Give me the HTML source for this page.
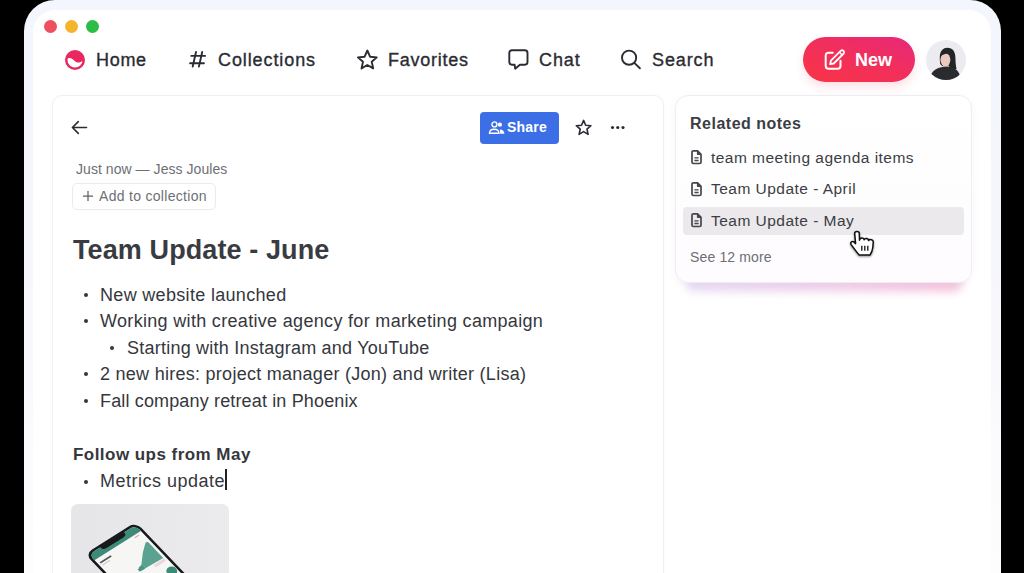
<!DOCTYPE html>
<html><head><meta charset="utf-8">
<style>
*{margin:0;padding:0;box-sizing:border-box}
html,body{width:1024px;height:573px;overflow:hidden;background:#000;font-family:"Liberation Sans",sans-serif;}
.abs{position:absolute}
#win{position:absolute;left:24px;top:0px;width:977px;height:620px;background:linear-gradient(180deg,#f3f6fd 0px,#f4f6fc 150px,#f7f7fc 320px,#fbfbfd 450px,#fdfdfe 573px);border-radius:31px 31px 0 0}
#inner{position:absolute;left:33px;top:10px;width:958px;height:620px;background:#fff;border-radius:22px 22px 0 0}
.dot{position:absolute;top:20px;width:13px;height:13px;border-radius:50%}
.t{position:absolute;white-space:nowrap;line-height:1}
.nav{font-size:18px;color:#2a2c33;letter-spacing:0.9px;-webkit-text-stroke:0.35px #2a2c33}
#card{position:absolute;left:52px;top:95px;width:612px;height:520px;border:1px solid #f0f0f2;border-radius:10px;background:#fff;box-shadow:0 0 4px rgba(0,0,0,0.025)}
#rel{position:absolute;left:675px;top:95px;width:297px;height:188px;border:1px solid #efedf3;border-radius:13px;background:linear-gradient(180deg,#ffffff 0%,#fefcfe 100%);box-shadow:0 2px 6px rgba(200,170,210,0.12)}
#relsh{position:absolute;left:686px;top:272px;width:276px;height:20px;border-radius:8px;background:linear-gradient(90deg,rgba(205,180,235,0.45),rgba(225,165,215,0.5) 50%,rgba(240,150,195,0.55));filter:blur(4.5px)}
.body{font-size:18px;color:#35373d;letter-spacing:0.32px}
.bul{position:absolute;width:4px;height:4px;border-radius:50%;background:#35373d}
.rn{font-size:15.5px;color:#3b3d43;letter-spacing:0.47px}
svg{position:absolute;overflow:visible}
</style></head><body>
<div id="win"></div>
<div id="inner"></div>
<div class="dot" style="left:44px;background:#ef4f5f"></div>
<div class="dot" style="left:65px;background:#f4b42c"></div>
<div class="dot" style="left:86px;background:#2bbd46"></div>

<!-- nav -->
<svg style="left:64.8px;top:49.5px" width="20" height="20" viewBox="0 0 20 20">
  <defs><clipPath id="hc"><circle cx="10" cy="10" r="7.5"/></clipPath></defs>
  <circle cx="10" cy="10" r="10" fill="#e8285f"/>
  <path clip-path="url(#hc)" d="M0 9.8 C2.5 7.6 5 7.3 7.4 9.1 C9.6 10.9 11 12.6 13 12.6 C15 12.6 16.5 11.3 20 10.3 V20 H0 Z" fill="#fff"/>
</svg>
<div class="t nav" style="left:96px;top:51px;letter-spacing:0.7px">Home</div>

<svg style="left:188px;top:50px" width="20" height="20" viewBox="0 0 20 20" fill="none" stroke="#2a2c33" stroke-width="1.9" stroke-linecap="round">
  <path d="M8 2 L4.7 16.6 M14.2 2 L10.9 16.6 M3.3 5.9 H17.1 M2.1 13.3 H15.9"/>
</svg>
<div class="t nav" style="left:218px;top:51px">Collections</div>

<svg style="left:356px;top:49px" width="22" height="21" viewBox="0 0 22 21" fill="none" stroke="#2a2c33" stroke-width="1.9" stroke-linejoin="round">
  <path d="M11.35 1.50 L14.05 7.68 L20.77 8.34 L15.72 12.82 L17.17 19.41 L11.35 16.00 L5.53 19.41 L6.98 12.82 L1.93 8.34 L8.65 7.68 Z"/>
</svg>
<div class="t nav" style="left:388px;top:51px;letter-spacing:0.75px">Favorites</div>

<svg style="left:507px;top:49px" width="22" height="22" viewBox="0 0 22 22" fill="none" stroke="#2a2c33" stroke-width="1.9" stroke-linejoin="round">
  <path d="M4.9 1.3 H17.9 C19.5 1.3 20.5 2.3 20.5 3.9 V13.1 C20.5 14.7 19.5 15.7 17.9 15.7 H12.9 L8.2 19.7 L7.6 15.7 H4.9 C3.3 15.7 2.3 14.7 2.3 13.1 V3.9 C2.3 2.3 3.3 1.3 4.9 1.3 Z"/>
</svg>
<div class="t nav" style="left:539px;top:51px">Chat</div>

<svg style="left:620px;top:50px" width="22" height="21" viewBox="0 0 22 21" fill="none" stroke="#2a2c33" stroke-width="1.9" stroke-linecap="round">
  <circle cx="9.1" cy="7.7" r="7.1"/><path d="M14.3 12.9 L19.9 18.3"/>
</svg>
<div class="t nav" style="left:652px;top:51px">Search</div>

<!-- New button -->
<div class="abs" style="left:803px;top:37px;width:112px;height:45px;border-radius:23px;background:linear-gradient(20deg,#f93547 0%,#f22f5a 50%,#e6297a 100%);box-shadow:0 5px 10px rgba(240,60,100,0.16)"></div>
<svg style="left:823px;top:49px" width="22" height="22" viewBox="0 0 22 22" fill="none" stroke="#fff" stroke-width="1.8" stroke-linecap="round" stroke-linejoin="round">
  <path d="M9.8 3.8 H5.6 C3.8 3.8 2.7 4.9 2.7 6.7 V16.8 C2.7 18.6 3.8 19.7 5.6 19.7 H14.6 C16.4 19.7 17.5 18.6 17.5 16.8 V11.8" stroke-width="2"/>
  <path d="M7.2 15.2 L7.9 11.7 L17.9 1.7 A2 2 0 0 1 20.7 4.5 L10.7 14.5 Z" stroke-width="1.8"/>
  <path d="M16.4 3.2 L19.2 6" stroke-width="1.4"/>
</svg>
<div class="t" style="left:855px;top:51px;font-size:18px;font-weight:bold;color:#fff">New</div>

<!-- avatar -->
<div class="abs" style="left:925.5px;top:39.5px;width:40px;height:40px;border-radius:50%;background:#ecebef;overflow:hidden">
  <svg style="left:0;top:0" width="40" height="40" viewBox="0 0 40 40">
    <path d="M13.8 18 C13.6 11 17 7.8 21.5 7.8 C26.5 7.8 29.3 11.5 29.4 17.5 C29.5 22 29.8 25.5 30.5 29 L24 29 L23 26 L16 26 L14.2 24 C13.9 22 13.8 20 13.8 18 Z" fill="#232427"/>
    <path d="M17 23 H22.5 V28.5 H17 Z" fill="#d9aca7"/>
    <ellipse cx="19.4" cy="19.8" rx="5" ry="6.5" fill="#ecc8c3"/>
    <path d="M14.3 16.5 C14.8 12 18.5 10.5 22.5 11 C24.5 11.3 25.6 12.5 25.8 14.5 C23.5 13 19 12.8 14.3 16.5 Z" fill="#232427"/>
    <path d="M3.5 40 C4 33.5 8 29 14 27.4 C17 26.6 21 26.6 25 27.2 C30.5 28.2 33.5 32 34.5 38 L34.5 40 Z" fill="#2a2b2e"/>
  </svg>
</div>

<!-- main card -->
<div id="card"></div>
<svg style="left:71px;top:120px" width="18" height="15" viewBox="0 0 18 15" fill="none" stroke="#2a2c33" stroke-width="1.6" stroke-linecap="round" stroke-linejoin="round">
  <path d="M15.5 7.5 H1.8 M7.3 1.6 L1.4 7.5 L7.3 13.4"/>
</svg>

<div class="abs" style="left:480px;top:112px;width:79px;height:32px;border-radius:4px;background:#3c6fe5"></div>
<svg style="left:488px;top:121px" width="17" height="13" viewBox="0 0 17 13" fill="none" stroke="#fff" stroke-width="1.4">
  <circle cx="6.4" cy="3.4" r="2.5"/>
  <path d="M1.5 12.3 C1.5 9.6 3.4 8.3 6.2 8.3 C9 8.3 10.9 9.6 10.9 12.3 Z"/>
  <circle cx="11.9" cy="3.7" r="2.1" fill="#fff" stroke="none"/>
  <path d="M11.9 8.4 C14.6 8.4 16.4 10 16.4 12.8 H12.2 Z" fill="#fff" stroke="none"/>
</svg>
<div class="t" style="left:507px;top:120px;font-size:14px;font-weight:bold;color:#fff;letter-spacing:0.2px">Share</div>
<svg style="left:574px;top:118px" width="19" height="19" viewBox="0 0 19 19" fill="none" stroke="#2a2c33" stroke-width="1.6" stroke-linejoin="round">
  <path d="M9.60 2.40 L11.69 7.23 L16.92 7.72 L12.98 11.20 L14.13 16.33 L9.60 13.65 L5.07 16.33 L6.22 11.20 L2.28 7.72 L7.51 7.23 Z"/>
</svg>
<svg style="left:610px;top:125px" width="16" height="5" viewBox="0 0 16 5" fill="#2a2c33">
  <circle cx="2.5" cy="2.5" r="1.55"/><circle cx="7.75" cy="2.5" r="1.55"/><circle cx="13" cy="2.5" r="1.55"/>
</svg>

<div class="t" style="left:76px;top:162px;font-size:14px;color:#6d6f75;letter-spacing:0.05px">Just now — Jess Joules</div>
<div class="abs" style="left:72px;top:183px;width:144px;height:27px;border:1px solid #ebebee;border-radius:5px"></div>
<svg style="left:82px;top:189.5px" width="12" height="12" viewBox="0 0 12 12" fill="none" stroke="#5f6167" stroke-width="1.25"><path d="M6 1 V11 M1 6 H11"/></svg>
<div class="t" style="left:99px;top:189px;font-size:14px;color:#6d6f75;letter-spacing:0.3px">Add to collection</div>

<div class="t" style="left:73px;top:237px;font-size:27px;font-weight:bold;color:#393b41;letter-spacing:0.1px">Team Update - June</div>

<div class="bul" style="left:84px;top:293px"></div>
<div class="t body" style="left:100px;top:286px">New website launched</div>
<div class="bul" style="left:84px;top:319px"></div>
<div class="t body" style="left:100px;top:312px">Working with creative agency for marketing campaign</div>
<div class="bul" style="left:110px;top:346px"></div>
<div class="t body" style="left:127px;top:339px;letter-spacing:0.23px">Starting with Instagram and YouTube</div>
<div class="bul" style="left:84px;top:372px"></div>
<div class="t body" style="left:100px;top:365px;letter-spacing:0.27px">2 new hires: project manager (Jon) and writer (Lisa)</div>
<div class="bul" style="left:84px;top:399px"></div>
<div class="t body" style="left:100px;top:392px;letter-spacing:0.15px">Fall company retreat in Phoenix</div>

<div class="t" style="left:73px;top:446px;font-size:17px;letter-spacing:0.46px;font-weight:bold;color:#35373d">Follow ups from May</div>
<div class="bul" style="left:84px;top:480px"></div>
<div class="t body" style="left:100px;top:472px;letter-spacing:0.5px">Metrics update</div>
<div class="abs" style="left:225px;top:469px;width:1.5px;height:21px;background:#222"></div>

<!-- image -->
<div class="abs" style="left:71px;top:504px;width:158px;height:80px;border-radius:7px;background:linear-gradient(90deg,#e6e6e9,#ebebee);overflow:hidden">
  <svg style="left:0;top:0" width="158" height="80" viewBox="0 0 158 80">
    <g transform="matrix(0.846,-0.534,0.69,0.723,14,50)">
      <rect x="0" y="0" width="60" height="120" rx="8" fill="#17191a"/>
      <rect x="2.6" y="2.6" width="54.8" height="114" rx="6" fill="#f6f6f5"/>
      <path d="M2.6 8.6 C2.6 5 5 2.6 8.6 2.6 H51.4 C55 2.6 57.4 5 57.4 8.6 V10.5 H2.6 Z" fill="#3c8a77"/>
      <path d="M16 2 H44 V3.5 C44 5.5 42.5 6.6 40 6.6 H20 C17.5 6.6 16 5.5 16 3.5 Z" fill="#17191a"/>
      <rect x="5" y="15" width="13" height="1.8" fill="#55575a"/>
      <rect x="5" y="18.5" width="9" height="1.1" fill="#c4c6c8"/>
      <path d="M28 45 L30 41 L34 40 L39 35 L44 30 L49 26 L53 23 L55 24 L55 46 Z" fill="#5aa391"/>
      <path d="M28 45 V42 L34 41 L34 45.5 Z" fill="#4b9582"/>
      <rect x="43" y="47" width="12" height="3" fill="#ecd5dc"/>
      <circle cx="52" cy="62" r="5" fill="#3c8a77"/>
      <rect x="48" y="12.5" width="5" height="1.2" fill="#e3a0a0"/>
    </g>
  </svg>
</div>

<!-- related notes -->
<div id="relsh"></div>
<div id="rel"></div>
<div class="t" style="left:690px;top:116px;font-size:16px;font-weight:bold;color:#3b3d43;letter-spacing:0.5px">Related notes</div>
<div class="abs" style="left:683px;top:207px;width:281px;height:28px;border-radius:4px;background:#ebe9ec"></div>

<svg style="left:691px;top:149.5px" width="11" height="14" viewBox="0 0 11 14" fill="none" stroke="#44464c" stroke-width="1.7" stroke-linejoin="round"><path d="M1 2.2 C1 1.3 1.5 0.9 2.4 0.9 H6.6 L10 4.3 V12.2 C10 13.1 9.5 13.5 8.6 13.5 H2.4 C1.5 13.5 1 13.1 1 12.2 Z"/><path d="M6.4 1 L9.9 4.5 L6.4 4.5 Z" fill="#44464c" stroke-width="1"/><path d="M3.4 7.9 H7.6 M3.4 10.5 H7.6" stroke-width="1.3"/></svg>
<div class="t rn" style="left:711px;top:150px">team meeting agenda items</div>
<svg style="left:691px;top:182px" width="11" height="14" viewBox="0 0 11 14" fill="none" stroke="#44464c" stroke-width="1.7" stroke-linejoin="round"><path d="M1 2.2 C1 1.3 1.5 0.9 2.4 0.9 H6.6 L10 4.3 V12.2 C10 13.1 9.5 13.5 8.6 13.5 H2.4 C1.5 13.5 1 13.1 1 12.2 Z"/><path d="M6.4 1 L9.9 4.5 L6.4 4.5 Z" fill="#44464c" stroke-width="1"/><path d="M3.4 7.9 H7.6 M3.4 10.5 H7.6" stroke-width="1.3"/></svg>
<div class="t rn" style="left:711px;top:181px">Team Update - April</div>
<svg style="left:691px;top:213.3px" width="11" height="14" viewBox="0 0 11 14" fill="none" stroke="#44464c" stroke-width="1.7" stroke-linejoin="round"><path d="M1 2.2 C1 1.3 1.5 0.9 2.4 0.9 H6.6 L10 4.3 V12.2 C10 13.1 9.5 13.5 8.6 13.5 H2.4 C1.5 13.5 1 13.1 1 12.2 Z"/><path d="M6.4 1 L9.9 4.5 L6.4 4.5 Z" fill="#44464c" stroke-width="1"/><path d="M3.4 7.9 H7.6 M3.4 10.5 H7.6" stroke-width="1.3"/></svg>
<div class="t rn" style="left:711px;top:213px">Team Update - May</div>
<div class="t" style="left:690px;top:250px;font-size:14px;color:#6d6f75;letter-spacing:0.15px">See 12 more</div>

<!-- cursor -->
<svg style="left:850px;top:231px;filter:drop-shadow(0 1.5px 1.2px rgba(0,0,0,0.45))" width="24" height="25" viewBox="0 0 24 25">
  <path d="M4.7 2.6 C4.7 -0.2 9.3 -0.2 9.3 2.6 L9.5 9.2 C10 6.2 13.8 6.2 14.2 8.8 C14.8 6.8 18.4 7.2 18.6 9.6 C19.4 7.8 23.8 8.6 23.2 11.6 L22.8 16.5 C22.4 20 21.2 22.2 20 24 L9.2 24 C7 21.5 3.2 16.4 1.2 13.6 C0 11.8 1.8 9.6 3.8 10.9 L5.6 12.6 Z" fill="#fff" stroke="#111" stroke-width="1.5" stroke-linejoin="round"/>
  <path d="M11.8 14.8 V19.8 M14.8 14.8 V19.8 M17.8 14.8 V19.8" stroke="#111" stroke-width="1.3"/>
</svg>
</body></html>
